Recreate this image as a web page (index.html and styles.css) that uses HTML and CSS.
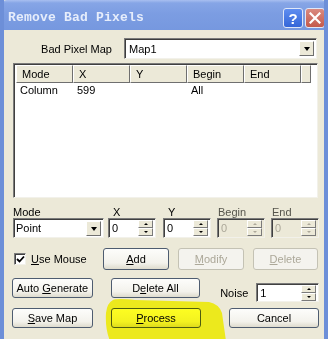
FILE: index.html
```html
<html lang="en">
<head>
    <meta charset="UTF-8"/>
    <title>Remove Bad Pixels</title>
    <link rel="stylesheet" href="styles.css">
</head>
<body>

<div class="window">
    <div class="titlebar">
        <span class="title">Remove Bad Pixels</span>
        <span class="tb_btn help">?</span>
        <span class="tb_btn close">
            <svg width="12" height="12" viewBox="0 0 12 12"><path d="M1.5 1.5 L10.5 10.5 M10.5 1.5 L1.5 10.5" stroke="#fff" stroke-width="2.2" stroke-linecap="square"/></svg>
        </span>
    </div>

    <div class="client">
        <div class="map_row">
            <span class="map_label">Bad Pixel Map</span>
            <div class="combo map_combo">
                <span class="combo_text">Map1</span>
                <span class="drop_btn"><span class="arrow"></span></span>
            </div>
        </div>

        <div class="listview">
            <div class="lv_header">
                <span class="lv_col">Mode</span>
                <span class="lv_col">X</span>
                <span class="lv_col">Y</span>
                <span class="lv_col">Begin</span>
                <span class="lv_col">End</span>
                <span class="lv_col filler"></span>
            </div>
            <div class="lv_row">
                <span class="lv_cell">Column</span>
                <span class="lv_cell">599</span>
                <span class="lv_cell"></span>
                <span class="lv_cell">All</span>
                <span class="lv_cell"></span>
            </div>
        </div>

        <div class="edit_labels">
            <span class="lbl_mode">Mode</span>
            <span class="lbl_x">X</span>
            <span class="lbl_y">Y</span>
            <span class="lbl_begin">Begin</span>
            <span class="lbl_end">End</span>
        </div>

        <div class="edit_row">
            <div class="combo mode_combo">
                <span class="combo_text">Point</span>
                <span class="drop_btn"><span class="arrow"></span></span>
            </div>
            <div class="spin sp_x"><span class="spin_text">0</span><span class="spin_btns"><span class="sb up"></span><span class="sb down"></span></span></div>
            <div class="spin sp_y"><span class="spin_text">0</span><span class="spin_btns"><span class="sb up"></span><span class="sb down"></span></span></div>
            <div class="spin sp_begin disabled"><span class="spin_text">0</span><span class="spin_btns"><span class="sb up"></span><span class="sb down"></span></span></div>
            <div class="spin sp_end disabled"><span class="spin_text">0</span><span class="spin_btns"><span class="sb up"></span><span class="sb down"></span></span></div>
        </div>

        <div class="btn_row row_add">
            <label class="check">
                <span class="check_box">
                    <svg width="9" height="9" viewBox="0 0 9 9"><path d="M1 4 L3.5 6.5 L8 1.5" stroke="#000" stroke-width="1.8" fill="none"/></svg>
                </span>
                <span><u>U</u>se Mouse</span>
            </label>
            <button class="btn b_add"><u>A</u>dd</button>
            <button class="btn b_modify disabled"><u>M</u>odify</button>
            <button class="btn b_delete disabled"><u>D</u>elete</button>
        </div>

        <div class="btn_row row_auto">
            <button class="btn b_left">Auto <u>G</u>enerate</button>
            <button class="btn b_mid">D<u>e</u>lete All</button>
            <span class="noise_label">Noise</span>
            <div class="spin sp_noise"><span class="spin_text">1</span><span class="spin_btns"><span class="sb up"></span><span class="sb down"></span></span></div>
        </div>

        <div class="btn_row row_save">
            <button class="btn b_left"><u>S</u>ave Map</button>
            <button class="btn b_mid"><u>P</u>rocess</button>
            <button class="btn b_cancel">Cancel</button>
        </div>
    </div>

    <svg class="highlight" width="130" height="42" viewBox="0 0 130 42">
        <path d="M8 1 Q12 -1 30 1 L104 3 Q114 5 117 14 L121 42 L5 42 Q0 30 1 14 Q2 4 8 1 Z" fill="#ffff22"/>
    </svg>
</div>

</body>
</html>
```

FILE: styles.css
```css
body {
    margin: 0;
    font-family: 'Liberation Sans', Arial, sans-serif;
    font-size: 11px;
    color: #000;
    background: #ece9d8;
}

.window {
    position: relative;
    width: 328px;
    height: 339px;
    overflow: hidden;
    background: #ece9d8;
    border-left: 4px solid #6d8fd8;
    border-right: 4px solid #6d8fd8;
    box-sizing: border-box;
}

/* title bar */

.titlebar {
    display: flex;
    align-items: center;
    height: 30px;
    margin: 0 -4px;
    padding: 0 3px 0 8px;
    box-sizing: border-box;
    border-radius: 7px 7px 0 0;
    background: linear-gradient(to bottom, #a8bff0 0, #86a5e6 3px, #7c9de2 45%, #7698df 100%);
}

.title {
    flex: 1;
    font-family: 'Liberation Mono', 'Courier New', monospace;
    font-weight: bold;
    font-size: 13px;
    letter-spacing: 0.2px;
    color: #e6edfb;
    padding-top: 4px;
}

.tb_btn {
    display: flex;
    align-items: center;
    justify-content: center;
    width: 20px;
    height: 20px;
    margin-top: 6px;
    margin-left: 2px;
    border: 1px solid #dfe7f8;
    border-radius: 3px;
    box-sizing: border-box;
    color: #fff;
    font-weight: bold;
    font-size: 15px;
}

.help {
    background: linear-gradient(to bottom, #5f8ef0, #3466d8);
}

.close {
    background: linear-gradient(to bottom, #d98a80, #c45a4c);
}

/* client area */

.client {
    padding: 8px 5px 0 9px;
    font-size: 11px;
}

.map_row {
    display: flex;
    align-items: center;
}

.map_label {
    width: 99px;
    text-align: right;
    margin-right: 12px;
}

.combo {
    display: flex;
    align-items: center;
    background: #fff;
    border: 1px solid;
    border-color: #7b7b7b #f2f1ea #f2f1ea #7b7b7b;
    box-shadow: inset 1px 1px 0 #3d3d3d;
    box-sizing: border-box;
    padding: 2px 2px 2px 4px;
}

.map_combo {
    width: 193px;
    height: 21px;
}

.combo_text {
    flex: 1;
}

.drop_btn {
    display: flex;
    align-items: center;
    justify-content: center;
    width: 15px;
    height: 15px;
    background: #ece9d8;
    border: 1px solid;
    border-color: #fff #6f6f6f #6f6f6f #fff;
    box-sizing: border-box;
}

.arrow {
    width: 0;
    height: 0;
    border-left: 3px solid transparent;
    border-right: 3px solid transparent;
    border-top: 4px solid #000;
    margin-top: 1px;
}

/* list view */

.listview {
    margin-top: 4px;
    width: 305px;
    height: 135px;
    background: #fff;
    border: 1px solid;
    border-color: #7b7b7b #f2f1ea #f2f1ea #7b7b7b;
    box-shadow: inset 1px 1px 0 #404040;
    box-sizing: border-box;
    padding: 1px 6px 0 2px;
}

.lv_header {
    display: flex;
    height: 18px;
}

.lv_col {
    width: 57px;
    padding-left: 5px;
    box-sizing: border-box;
    background: #ece9d8;
    border: 1px solid;
    border-color: #fff #6f6f6f #6f6f6f #fff;
    line-height: 16px;
}

.lv_col.filler {
    flex: 1;
    width: auto;
}

.lv_row {
    display: flex;
    height: 15px;
    line-height: 15px;
}

.lv_cell {
    width: 57px;
    padding-left: 4px;
    box-sizing: border-box;
}

/* edit row */

.edit_labels {
    display: flex;
    margin-top: 9px;
    line-height: 11px;
}

.lbl_mode {
    width: 100px;
}

.lbl_x {
    width: 55px;
}

.lbl_y {
    width: 50px;
}

.lbl_begin {
    width: 54px;
    color: #55544c;
}

.lbl_end {
    color: #55544c;
}

.edit_row {
    display: flex;
}

.mode_combo {
    width: 91px;
    height: 20px;
    margin-right: 4px;
    padding-left: 2px;
}

.spin {
    display: flex;
    align-items: center;
    width: 48px;
    height: 20px;
    background: #fff;
    border: 1px solid;
    border-color: #7b7b7b #f2f1ea #f2f1ea #7b7b7b;
    box-shadow: inset 1px 1px 0 #404040;
    box-sizing: border-box;
    padding: 2px 2px 2px 3px;
}

.sp_x {
    margin-right: 7px;
}

.sp_y, .sp_begin {
    margin-right: 6px;
}

.spin_text {
    flex: 1;
}

.spin_btns {
    display: flex;
    flex-direction: column;
    width: 15px;
    height: 16px;
}

.sb {
    flex: 1;
    display: flex;
    align-items: center;
    justify-content: center;
    background: #ece9d8;
    border: 1px solid;
    border-color: #fff #7a7a7a #7a7a7a #fff;
}

.sb.up::after {
    content: "";
    border-left: 2px solid transparent;
    border-right: 2px solid transparent;
    border-bottom: 2px solid #000;
}

.sb.down::after {
    content: "";
    border-left: 2px solid transparent;
    border-right: 2px solid transparent;
    border-top: 2px solid #000;
}

.spin.disabled {
    background: #ece9d8;
    color: #aca899;
}

.spin.disabled .sb::after {
    border-top-color: #aca899;
    border-bottom-color: #aca899;
}

/* buttons */

.btn_row {
    display: flex;
    align-items: center;
}

.btn {
    height: 21px;
    padding: 0;
    white-space: nowrap;
    font-family: 'Liberation Sans', Arial, sans-serif;
    font-size: 11px;
    color: #000;
    background: linear-gradient(to bottom, #fdfdfb 0, #f3f2ec 70%, #dedbcd 100%);
    border: 1px solid #4e5c70;
    border-radius: 3px;
    box-sizing: border-box;
}

.btn.disabled {
    color: #aca899;
    border-color: #c4c2b4;
    background: #f4f3ee;
}

.row_add {
    margin-top: 10px;
    height: 22px;
}

.check {
    display: flex;
    align-items: center;
    width: 90px;
}

.check_box {
    display: flex;
    align-items: center;
    justify-content: center;
    width: 12px;
    height: 12px;
    margin: 0 5px 0 1px;
    background: #fff;
    border: 1px solid;
    border-color: #7b7b7b #f2f1ea #f2f1ea #7b7b7b;
    box-shadow: inset 1px 1px 0 #404040;
    box-sizing: border-box;
}

.b_add {
    width: 66px;
    height: 22px;
    margin-right: 9px;
}

.b_modify {
    width: 66px;
    height: 22px;
    margin-right: 9px;
}

.b_delete {
    width: 65px;
    height: 22px;
}

.row_auto {
    margin-top: 8px;
    height: 20px;
    align-items: flex-start;
}

.b_left {
    width: 81px;
    height: 20px;
    margin-left: -1px;
    margin-right: 18px;
}

.b_mid {
    width: 90px;
    height: 20px;
}

.noise_label {
    margin: 9px 8px 0 20px;
}

.sp_noise {
    width: 63px;
    margin-top: 5px;
    height: 19px;
}

.row_save {
    margin-top: 10px;
}

.b_cancel {
    width: 90px;
    height: 20px;
    margin-left: 28px;
}

/* yellow marker over the Process button */

.highlight {
    position: absolute;
    left: 101px;
    top: 299px;
    mix-blend-mode: multiply;
}
```
